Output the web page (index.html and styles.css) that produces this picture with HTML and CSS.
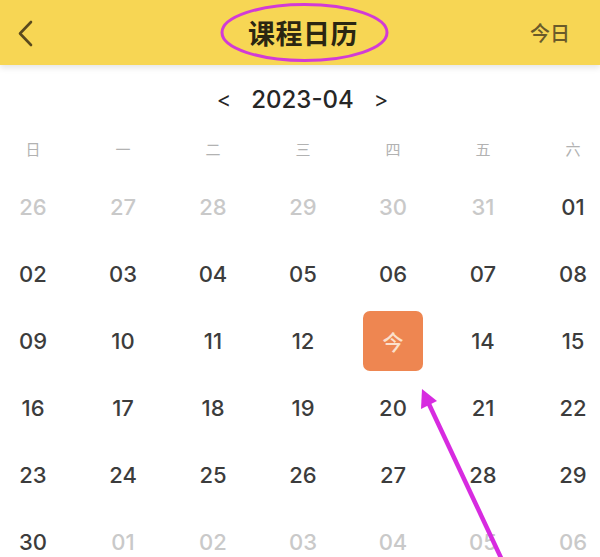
FILE: index.html
```html
<!DOCTYPE html>
<html lang="zh-CN">
<head>
<meta charset="utf-8">
<title>课程日历</title>
<link rel="stylesheet" href="styles.css">
</head>
<body>
<div class="page">
  <header class="topbar">
    <div class="back">
      <svg width="17" height="27" viewBox="0 0 17 27"><polyline points="14,2 3,13.5 14,25" fill="none" stroke="#5a4a1e" stroke-width="2.6" stroke-linecap="round" stroke-linejoin="round"/></svg>
    </div>
    <h1 class="title">课程日历</h1>
    <div class="today-link">今日</div>
  </header>

  <div class="month-nav">
    <span class="nav-arrow">&lt;</span>
    <span class="month">2023-04</span>
    <span class="nav-arrow">&gt;</span>
  </div>

  <div class="weekdays">
    <span>日</span><span>一</span><span>二</span><span>三</span><span>四</span><span>五</span><span>六</span>
  </div>

  <div class="days">
    <span class="other">26</span><span class="other">27</span><span class="other">28</span><span class="other">29</span><span class="other">30</span><span class="other">31</span><span>01</span>
    <span>02</span><span>03</span><span>04</span><span>05</span><span>06</span><span>07</span><span>08</span>
    <span>09</span><span>10</span><span>11</span><span>12</span><span><b class="today">今</b></span><span>14</span><span>15</span>
    <span>16</span><span>17</span><span>18</span><span>19</span><span>20</span><span>21</span><span>22</span>
    <span>23</span><span>24</span><span>25</span><span>26</span><span>27</span><span>28</span><span>29</span>
    <span>30</span><span class="other">01</span><span class="other">02</span><span class="other">03</span><span class="other">04</span><span class="other">05</span><span class="other">06</span>
  </div>

  <svg class="annot" width="600" height="557" viewBox="0 0 600 557">
    <ellipse cx="304.5" cy="32.5" rx="82.5" ry="28" fill="none" stroke="#d23bd6" stroke-width="3"/>
    <line x1="502" y1="560" x2="428" y2="402" stroke="#d72be0" stroke-width="4.5"/>
    <polygon points="422,389 437,401 421,409" fill="#d72be0"/>
  </svg>
</div>
</body>
</html>
```

FILE: styles.css
```css
* { box-sizing: border-box; }
html, body {
  margin: 0;
  padding: 0;
  background: #ffffff;
}
body {
  width: 600px;
  height: 557px;
  overflow: hidden;
  font-family: "Inter", "Noto Sans CJK SC", sans-serif;
}
.page {
  position: relative;
  width: 600px;
  height: 557px;
  overflow: hidden;
}
.topbar {
  height: 65px;
  background: #f7d654;
  display: grid;
  grid-template-columns: 1fr auto 1fr;
  align-items: center;
  box-shadow: 0 3px 6px rgba(0, 0, 0, 0.10);
  position: relative;
  z-index: 1;
}
.back {
  padding-left: 17px;
  display: flex;
  align-items: center;
  height: 65px;
  padding-top: 1px;
}
.title {
  margin: 0;
  padding-left: 6px;
  font-family: "Noto Sans CJK SC", sans-serif;
  font-weight: 700;
  font-size: 27px;
  color: #2b2612;
  letter-spacing: 0.5px;
}
.today-link {
  justify-self: end;
  padding-right: 30px;
  font-family: "Noto Sans CJK SC", sans-serif;
  font-weight: 500;
  font-size: 20px;
  color: #6a5a2a;
}
.month-nav {
  height: 68px;
  display: flex;
  justify-content: center;
  align-items: center;
  padding-left: 5px;
  color: #262626;
}
.nav-arrow {
  font-size: 22px;
  font-weight: 400;
}
.month {
  font-size: 24px;
  font-weight: 500;
  margin: 0 20px;
}
.weekdays {
  height: 30px;
  width: 630px;
  margin-left: -12px;
  display: grid;
  grid-template-columns: repeat(7, 90px);
  align-items: center;
  justify-items: center;
  font-family: "Noto Sans CJK SC", sans-serif;
  font-size: 15px;
  color: #b2b2b2;
}
.days {
  margin-top: 10px;
  width: 630px;
  margin-left: -12px;
  display: grid;
  grid-template-columns: repeat(7, 90px);
  grid-auto-rows: 67px;
  align-items: center;
  justify-items: center;
  font-size: 22px;
  font-weight: 500;
  color: #3c3c3c;
}
.days .other {
  color: #c9c9c9;
}
.today {
  width: 60px;
  height: 60px;
  border-radius: 7px;
  background: #ee8651;
  display: flex;
  align-items: center;
  justify-content: center;
  font-family: "Noto Sans CJK SC", sans-serif;
  font-weight: 500;
  font-size: 21px;
  color: #fbe0cc;
}
.annot {
  position: absolute;
  top: 0;
  left: 0;
  z-index: 2;
  pointer-events: none;
}
```
